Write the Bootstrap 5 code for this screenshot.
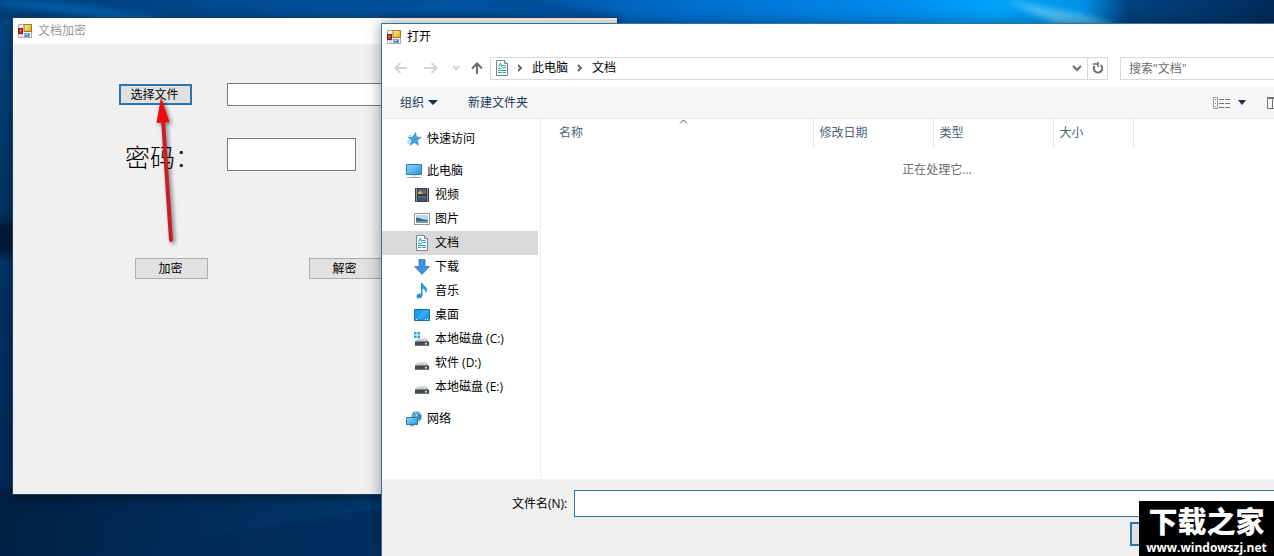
<!DOCTYPE html>
<html lang="zh-CN">
<head>
<meta charset="utf-8">
<meta name="viewport" content="width=device-width, initial-scale=1">
<title>文档加密</title>
<link href="https://cdn.jsdelivr.net/npm/bootstrap@5.3.0/dist/css/bootstrap.min.css" rel="stylesheet">
<style>
  body { font: 12px/16px "Open Sans", "Noto Sans CJK SC", sans-serif; color: #000; }
  .desktop { min-height: 100vh; background: #003266; }
  .wallpaper { position: absolute; inset: 0; width: 100%; height: 100%; }
  svg { display: block; flex: none; }

  /* encryption tool window */
  .app-window { position: absolute; top: 18px; left: 13px; width: 604px; bottom: 62px; background: #f0f0f0; box-shadow: 0 0 0 1px #1c3f5f, 0 3px 12px rgba(0,0,0,.5); }
  .app-title { height: 26px; padding-left: 5px; gap: 6px; background: #fff; color: #999; }
  .app-form { padding: 39px 0 0 106px; }
  .form-line { height: 23px; margin-bottom: 32px; }
  .pass-line { height: 33px; margin-bottom: 87px; }
  .lead-cell { width: 108px; }
  .win-btn { width: 73px; height: 21px; border: 1px solid #adadad; background: #e1e1e1; border-radius: 0; padding: 0 2px 0 0; font-size: 12px; line-height: 16px; color: #000; }
  .win-btn.is-default { border: 2px solid #2a76ad; }
  .win-input { border: 1px solid #7a7a7a; border-radius: 0; background: #fff; padding: 0 4px; height: 100%; }
  .file-input { width: 280px; }
  .pass-input { width: 129px; }
  .pass-label { font-size: 25px; line-height: 32px; font-weight: 300; padding: 5px 0 0 6px; white-space: nowrap; }
  .action-line { padding-left: 16px; gap: 101px; }

  /* file dialog */
  .open-dialog { position: absolute; top: 23px; left: 381px; right: -60px; bottom: 0; border: 1px solid #2f74a3; border-bottom: 0; background: #fff; box-shadow: 0 0 14px rgba(0,0,0,.4); }
  .dialog-title { height: 25px; padding-left: 5px; gap: 6px; }
  .address-bar { height: 38px; padding: 0 13px 0 11px; }
  .ghost-btn { border: 0; background: none; padding: 0; color: inherit; line-height: 16px; }
  .nav-keys { width: 97px; gap: 14px; }
  .path-box { height: 23px; border: 1px solid #d9d9d9; padding-left: 3px; }
  .path-box a { color: #000; text-decoration: none; }
  .refresh-btn { width: 20px; height: 21px; border-left: 1px solid #d9d9d9; }
  .search-box { width: 200px; height: 23px; border: 1px solid #d9d9d9; border-radius: 0; margin-left: 12px; padding: 0 8px; }
  .search-box::placeholder { color: #6d6d6d; opacity: 1; }
  .tool-bar { height: 32px; padding: 0 50px 0 18px; gap: 30px; background: #f5f6f7; border-bottom: 1px solid #e4e6e8; color: #1e395b; }
  .view-btn { margin-right: 21px; }
  .side-tree { width: 159px; padding: 8px 2px 0 0; border-right: 1px solid #f0f0f0; flex: none; }
  .side-tree ul { margin: 0 0 8px; padding: 0; list-style: none; }
  .side-tree a { display: flex; align-items: center; gap: 5px; height: 24px; padding-left: 24px; color: #000; text-decoration: none; white-space: nowrap; }
  .side-tree a.sub { padding-left: 32px; }
  .side-tree a.active { background: #d9d9d9; }
  .file-table { table-layout: fixed; width: 100%; }
  .file-table th { height: 28px; padding: 0 6px; font-weight: 400; color: #4c607a; border-right: 1px solid #e5e5e5; position: relative; }
  .file-table th:first-child { padding-left: 18px; }
  .file-table th:last-child { border: 0; }
  .file-table td { padding: 15px 0 0; text-align: center; color: #6d6d6d; }
  .col-name { width: 272px; } .col-mid { width: 120px; } .col-size { width: 80px; }
  .sort-mark { position: absolute; top: 0; right: 125px; }
  .dialog-foot { height: 77px; padding: 11px 26px 0 130px; background: #f0f0f0; }
  .name-label { width: 62px; }
  .name-input { height: 27px; border: 1px solid #2f74a3; border-radius: 0; background: #fff; padding: 0 4px; }
  .open-btn { width: 88px; height: 24px; border: 2px solid #2a76ad; background: #e1e1e1; margin: 5px 89px 0 0; }

  .red-arrow { position: absolute; top: 90px; left: 145px; filter: drop-shadow(2px 2px 2px rgba(0,0,0,.5)); pointer-events: none; }
  .site-mark { position: absolute; right: 0; bottom: 0; width: 135px; height: 55px; background: #000; color: #fff; text-align: center; white-space: nowrap; }
  .site-name { font: 900 29px/38px "Noto Sans CJK SC", sans-serif; }
  .site-url { font: 700 12px/17px "Open Sans", sans-serif; }
</style>
</head>
<body>
<svg width="0" height="0" class="position-absolute" aria-hidden="true">
  <defs>
    <linearGradient id="gGold" x2="1" y2="1"><stop stop-color="#fff3a0"/><stop offset="1" stop-color="#e0a800"/></linearGradient>
    <linearGradient id="gBlue" x2="1" y2="1"><stop stop-color="#8fd6fb"/><stop offset="1" stop-color="#2797e0"/></linearGradient>
    <linearGradient id="gDisk" x2="0" y2="1"><stop stop-color="#e3e6e4"/><stop offset="1" stop-color="#b4bab7"/></linearGradient>
    <symbol id="i-form" viewBox="0 0 14 14">
      <path d="M.5.5h13v13H.5z" fill="#f4f4f4" stroke="#aaa"/><path d="M4 9v4M1 10h3" stroke="#bbb" fill="none"/>
      <path d="M6 .5h7.500v7H6z" fill="url(#gGold)" stroke="#9c7a22"/><path d="M.5 4.500h4v5h-4z" fill="#c3372a" stroke="#7b1c14"/><path d="M2 6h1v1H2z" fill="#ffb0a0"/>
      <path d="M6.500 9.500h5v3h-5z" fill="#4a83d0" stroke="#7ba0d5"/><path d="M7 10h3v1H7z" fill="#a9ccf5"/>
    </symbol>
    <symbol id="i-doc" viewBox="0 0 16 16">
      <path d="M2.500.5h8l3 3v12h-11z" fill="#fff" stroke="#78868c"/><path d="M10.500.5v3h3" fill="#e8eef0" stroke="#78868c"/>
      <path d="M8 5.500h3.500M4 8.500h3.500M8.500 7.500h3.500M4 10.500h8M4 12.500h3.500M8.500 12.500h3.500" stroke="#2f9ab8" fill="none"/><path d="M4.500 7l2-4 1 4" stroke="#2f9ab8" fill="none"/>
    </symbol>
    <symbol id="i-star" viewBox="0 0 16 16"><path d="M9.500 1.500l1 4.500 4.800.4-4 2.800 1 5-3.800-2.700-4.500 2.800 1.700-5L2 6.200l4.800-.2z" fill="#3ba3e4" stroke="#2386c8" stroke-width=".6"/><path d="M1 10.500l3-1M1.500 13l2.500-2M3 4l2 1" stroke="#6bbdf0"/></symbol>
    <symbol id="i-pc" viewBox="0 0 16 16"><path d="M.5 1.500h15v10H.5z" fill="url(#gBlue)" stroke="#2c7fae"/><path d="M6 12h4v1.500H6z" fill="#d0dade"/><path d="M1 14.500h14" stroke="#8ba3b0"/></symbol>
    <symbol id="i-video" viewBox="0 0 16 16"><path d="M1 1h14v14H1z" fill="#3d3d3d"/><path d="M2.500 1.500v14M13.500 1.500v14" stroke="#e6e6e6" stroke-dasharray="1 1"/><path d="M4 2h8v5H4z" fill="#58618c"/><path d="M4 9h8v5H4z" fill="#416aa3"/><path d="M4 7V5l3-1 2 3z" fill="#c9b54e"/><path d="M8 4l2-1 2 2v2H9z" fill="#924d70"/><path d="M4 14v-2l3-2 2 2 3-1v3z" fill="#39546c"/></symbol>
    <symbol id="i-pic" viewBox="0 0 16 16"><path d="M.5 2.500h15v11H.5z" fill="#fff" stroke="#8f9a9f"/><path d="M2 4h12v8H2z" fill="#b5dcf0"/><path d="M2 7c3-1 5 2 12 2v3H2z" fill="#376684"/><path d="M2 10h12v2H2z" fill="#7598aa"/></symbol>
    <symbol id="i-down" viewBox="0 0 16 16"><path d="M5 .5h6v7h4.500L8 15.500.5 7.500H5z" fill="#3d94dc" stroke="#2d7cba" stroke-width=".8"/></symbol>
    <symbol id="i-music" viewBox="0 0 16 16"><path d="M7 0h1.500c.4 3 4.500 3.500 4.500 7 0 1.500-.7 2.500-1.500 3.500C12 7.500 10.500 6 8.500 5.500V12c0 2-1.500 3.500-3.500 3.500S2.500 14.500 2.500 13.300C2.500 11.500 4.700 10 7 10.500z" fill="#2496d2"/></symbol>
    <symbol id="i-desk" viewBox="0 0 16 16"><path d="M.5 2.500h15v11H.5z" fill="#1e9df5" stroke="#1c6fa6"/><path d="M9 3h6L8 12H3z" fill="#48b3fb" opacity=".6"/><path d="M2 12.500h1M11 12.500h1M13 12.500h1" stroke="#fff"/></symbol>
    <symbol id="i-disk" viewBox="0 0 16 16"><path d="M3.500 7h9L15 11H1z" fill="url(#gDisk)"/><path d="M1 10.500h14V15H1z" fill="#454b49"/><path d="M1 14h14v1H1z" fill="#707775"/><path d="M11 12h2v1.500h-2z" fill="#d8f5dc"/></symbol>
    <symbol id="i-sys" viewBox="0 0 16 16"><use href="#i-disk"/><path d="M0 1h2.600v2.600H0zM3.500 1h2.600v2.600H3.500zM0 4.400h2.600V7H0zM3.500 4.400h2.600V7H3.500z" fill="#25a5cf"/></symbol>
    <symbol id="i-net" viewBox="0 0 16 16"><circle cx="10.500" cy="5.500" r="5.300" fill="#6aa9cf"/><path d="M7 2l3-1.500 1 2-2 2zM12 3l3 1v4l-2 1z" fill="#3b7ca8"/><path d="M9 1c2 1 0 3 2 4" stroke="#d3ecf7" fill="none"/><path d="M.5 6.500h11v7H.5z" fill="url(#gBlue)" stroke="#2978a5"/><path d="M4 14h4v1.500H4z" fill="#8bb4c8"/></symbol>
  </defs>
</svg>

<main class="desktop position-relative overflow-hidden">
  <svg class="wallpaper" viewBox="0 0 1274 556" preserveAspectRatio="none" aria-hidden="true">
    <defs>
      <linearGradient id="sky"><stop stop-color="#003d78"/><stop offset=".25" stop-color="#004f98"/><stop offset=".4" stop-color="#0054a0"/><stop offset=".55" stop-color="#0070cf"/><stop offset=".7" stop-color="#008bee"/><stop offset=".78" stop-color="#00a3fb"/><stop offset=".85" stop-color="#0092e8"/><stop offset=".885" stop-color="#00427e"/><stop offset="1" stop-color="#002c5a"/></linearGradient>
      <linearGradient id="edge" x2="0" y2="1"><stop stop-color="#004684"/><stop offset=".36" stop-color="#003262"/><stop offset=".39" stop-color="#001a38"/><stop offset=".43" stop-color="#001c3c"/><stop offset=".45" stop-color="#003468"/><stop offset=".85" stop-color="#00295a"/><stop offset=".9" stop-color="#002048"/></linearGradient>
      <linearGradient id="floor"><stop stop-color="#002044"/><stop offset="1" stop-color="#003a70"/></linearGradient>
      <filter id="soft"><feGaussianBlur stdDeviation="3"/></filter>
    </defs>
    <path d="M0 0h1274v556H0z" fill="url(#sky)"/>
    <path d="M0 20h14v536H0z" fill="url(#edge)"/>
    <path d="M0 490h400v66H0z" fill="url(#floor)"/>
    <path d="M80 556L400 505v51z" fill="#002b58" opacity=".6"/>
    <path d="M0 0l60 2 120 18H120L0 6z" fill="#0072c4" opacity=".6" filter="url(#soft)"/>
    <path d="M480 0l120 20h30L540 0z" fill="#003d80" opacity=".4" filter="url(#soft)"/>
    <path d="M1005 0l55 26h60L1080 14z" fill="#7fd8f5" opacity=".6" filter="url(#soft)"/>
  </svg>

  <section class="app-window" aria-label="文档加密">
    <header class="app-title d-flex align-items-center"><svg width="14" height="14"><use href="#i-form"/></svg><span>文档加密</span></header>
    <form class="app-form">
      <div class="form-line d-flex align-items-center">
        <div class="lead-cell"><button type="button" class="win-btn is-default d-block">选择文件</button></div>
        <input type="text" class="win-input file-input" aria-label="文件路径">
      </div>
      <div class="pass-line d-flex align-items-center">
        <label class="lead-cell pass-label" for="pass">密码：</label>
        <input type="password" id="pass" class="win-input pass-input">
      </div>
      <div class="action-line d-flex">
        <button type="button" class="win-btn">加密</button>
        <button type="button" class="win-btn">解密</button>
      </div>
    </form>
  </section>

  <section class="open-dialog d-flex flex-column" role="dialog" aria-label="打开">
    <header class="dialog-title d-flex align-items-center"><svg width="14" height="14"><use href="#i-form"/></svg><span>打开</span></header>
    <div class="address-bar d-flex align-items-center">
      <div class="nav-keys d-flex align-items-center">
        <button type="button" class="ghost-btn" aria-label="后退"><svg width="16" height="14" fill="none" stroke="#d3d3d3" stroke-width="2"><path d="M14 7H3M7.500 2L2.500 7l5 5"/></svg></button>
        <button type="button" class="ghost-btn" aria-label="前进"><svg width="16" height="14" fill="none" stroke="#d3d3d3" stroke-width="2"><path d="M1 7h12M8.500 2l5 5-5 5"/></svg></button>
        <div class="d-flex align-items-center gap-2">
          <button type="button" class="ghost-btn" aria-label="最近位置"><svg width="8" height="6" fill="none" stroke="#d3d3d3" stroke-width="2"><path d="M0 1l3 3 3-3"/></svg></button>
          <button type="button" class="ghost-btn" aria-label="上移"><svg width="16" height="14" fill="none" stroke="#6b6b6b" stroke-width="2"><path d="M8 13V3M3 7.500l5-5 5 5"/></svg></button>
        </div>
      </div>
      <nav class="path-box d-flex align-items-center flex-grow-1 gap-2" aria-label="路径">
        <svg width="16" height="16"><use href="#i-doc"/></svg>
        <svg width="6" height="8" fill="none" stroke="#666" stroke-width="2"><path d="M0 1l3 3-3 3"/></svg>
        <a href="#">此电脑</a>
        <svg width="8" height="8" fill="none" stroke="#666" stroke-width="2"><path d="M2 1l3 3-3 3"/></svg>
        <a href="#">文档</a>
        <div class="d-flex align-items-center gap-1 ms-auto">
          <button type="button" class="ghost-btn" aria-label="历史"><svg width="11" height="8" fill="none" stroke="#6b6b6b" stroke-width="2"><path d="M1 2l4 4 4-4"/></svg></button>
          <button type="button" class="ghost-btn refresh-btn d-flex align-items-center justify-content-center" aria-label="刷新"><svg width="12" height="12" fill="none" stroke="#6b6b6b" stroke-width="2"><path d="M2.500 4a4.200 4.200 0 1 0 6-1"/><path d="M1 2h5M6 0v5" stroke-width="1.500"/></svg></button>
        </div>
      </nav>
      <input type="search" class="search-box" placeholder='搜索"文档"' aria-label="搜索">
    </div>
    <div class="tool-bar d-flex align-items-center">
      <button type="button" class="ghost-btn d-flex align-items-center gap-1">组织 <svg width="10" height="6"><path d="M0 0h10L5 5z" fill="#1e2f4b"/></svg></button>
      <button type="button" class="ghost-btn">新建文件夹</button>
      <div class="d-flex align-items-center ms-auto">
        <button type="button" class="ghost-btn view-btn d-flex align-items-center" aria-label="视图"><svg width="25" height="14" fill="none" stroke="#777"><path d="M.5 1.500h4v11h-4z" stroke="#999"/><path d="M2 3.500h1M2 7.500h1M2 10.500h1M6 3.500h5M12 3.500h5M6 7.500h5M12 7.500h5M6 11.500h5M12 11.500h5"/></svg><svg width="8" height="5"><path d="M0 0h8L4 5z" fill="#1e2f4b"/></svg></button>
        <button type="button" class="ghost-btn" aria-label="预览窗格"><svg width="16" height="12" fill="none" stroke="#777"><path d="M.5.500h15v11H.5zM5.500 1v11"/><path d="M0 1h16" stroke-width="2"/></svg></button>
      </div>
    </div>
    <div class="d-flex flex-grow-1">
      <nav class="side-tree" aria-label="位置">
        <ul><li><a href="#"><svg width="16" height="16"><use href="#i-star"/></svg>快速访问</a></li></ul>
        <ul>
          <li><a href="#"><svg width="16" height="16"><use href="#i-pc"/></svg>此电脑</a></li>
          <li><a href="#" class="sub"><svg width="16" height="16"><use href="#i-video"/></svg>视频</a></li>
          <li><a href="#" class="sub"><svg width="16" height="16"><use href="#i-pic"/></svg>图片</a></li>
          <li><a href="#" class="sub active"><svg width="16" height="16"><use href="#i-doc"/></svg>文档</a></li>
          <li><a href="#" class="sub"><svg width="16" height="16"><use href="#i-down"/></svg>下载</a></li>
          <li><a href="#" class="sub"><svg width="16" height="16"><use href="#i-music"/></svg>音乐</a></li>
          <li><a href="#" class="sub"><svg width="16" height="16"><use href="#i-desk"/></svg>桌面</a></li>
          <li><a href="#" class="sub"><svg width="16" height="16"><use href="#i-sys"/></svg>本地磁盘 (C:)</a></li>
          <li><a href="#" class="sub"><svg width="16" height="16"><use href="#i-disk"/></svg>软件 (D:)</a></li>
          <li><a href="#" class="sub"><svg width="16" height="16"><use href="#i-disk"/></svg>本地磁盘 (E:)</a></li>
        </ul>
        <ul><li><a href="#"><svg width="16" height="16"><use href="#i-net"/></svg>网络</a></li></ul>
      </nav>
      <div class="flex-grow-1">
        <table class="file-table">
          <colgroup><col class="col-name"><col class="col-mid"><col class="col-mid"><col class="col-size"><col></colgroup>
          <thead><tr>
            <th scope="col">名称<svg class="sort-mark" width="9" height="5" fill="none" stroke="#555"><path d="M1 4.500L4.500 1 8 4.500"/></svg></th>
            <th scope="col">修改日期</th><th scope="col">类型</th><th scope="col">大小</th><th></th>
          </tr></thead>
          <tbody><tr><td colspan="5">正在处理它...</td></tr></tbody>
        </table>
      </div>
    </div>
    <footer class="dialog-foot">
      <div class="d-flex align-items-center">
        <label for="fname" class="name-label text-nowrap">文件名(N):</label>
        <input type="text" id="fname" class="name-input flex-grow-1">
      </div>
      <button type="button" class="open-btn d-block ms-auto" aria-label="打开"></button>
    </footer>
  </section>

  <svg class="red-arrow" width="40" height="156" viewBox="0 0 40 156" aria-hidden="true">
    <path d="M18 30L26 150" stroke="#c4202a" stroke-width="4" stroke-linecap="round"/>
    <path d="M16 7l8.500 25-13 1z" fill="#f00a0a"/>
  </svg>

  <aside class="site-mark">
    <div class="site-name">下载之家</div>
    <div class="site-url">www.windowszj.net</div>
  </aside>
</main>
<script src="https://cdn.jsdelivr.net/npm/bootstrap@5.3.0/dist/js/bootstrap.bundle.min.js"></script>
</body>
</html>
